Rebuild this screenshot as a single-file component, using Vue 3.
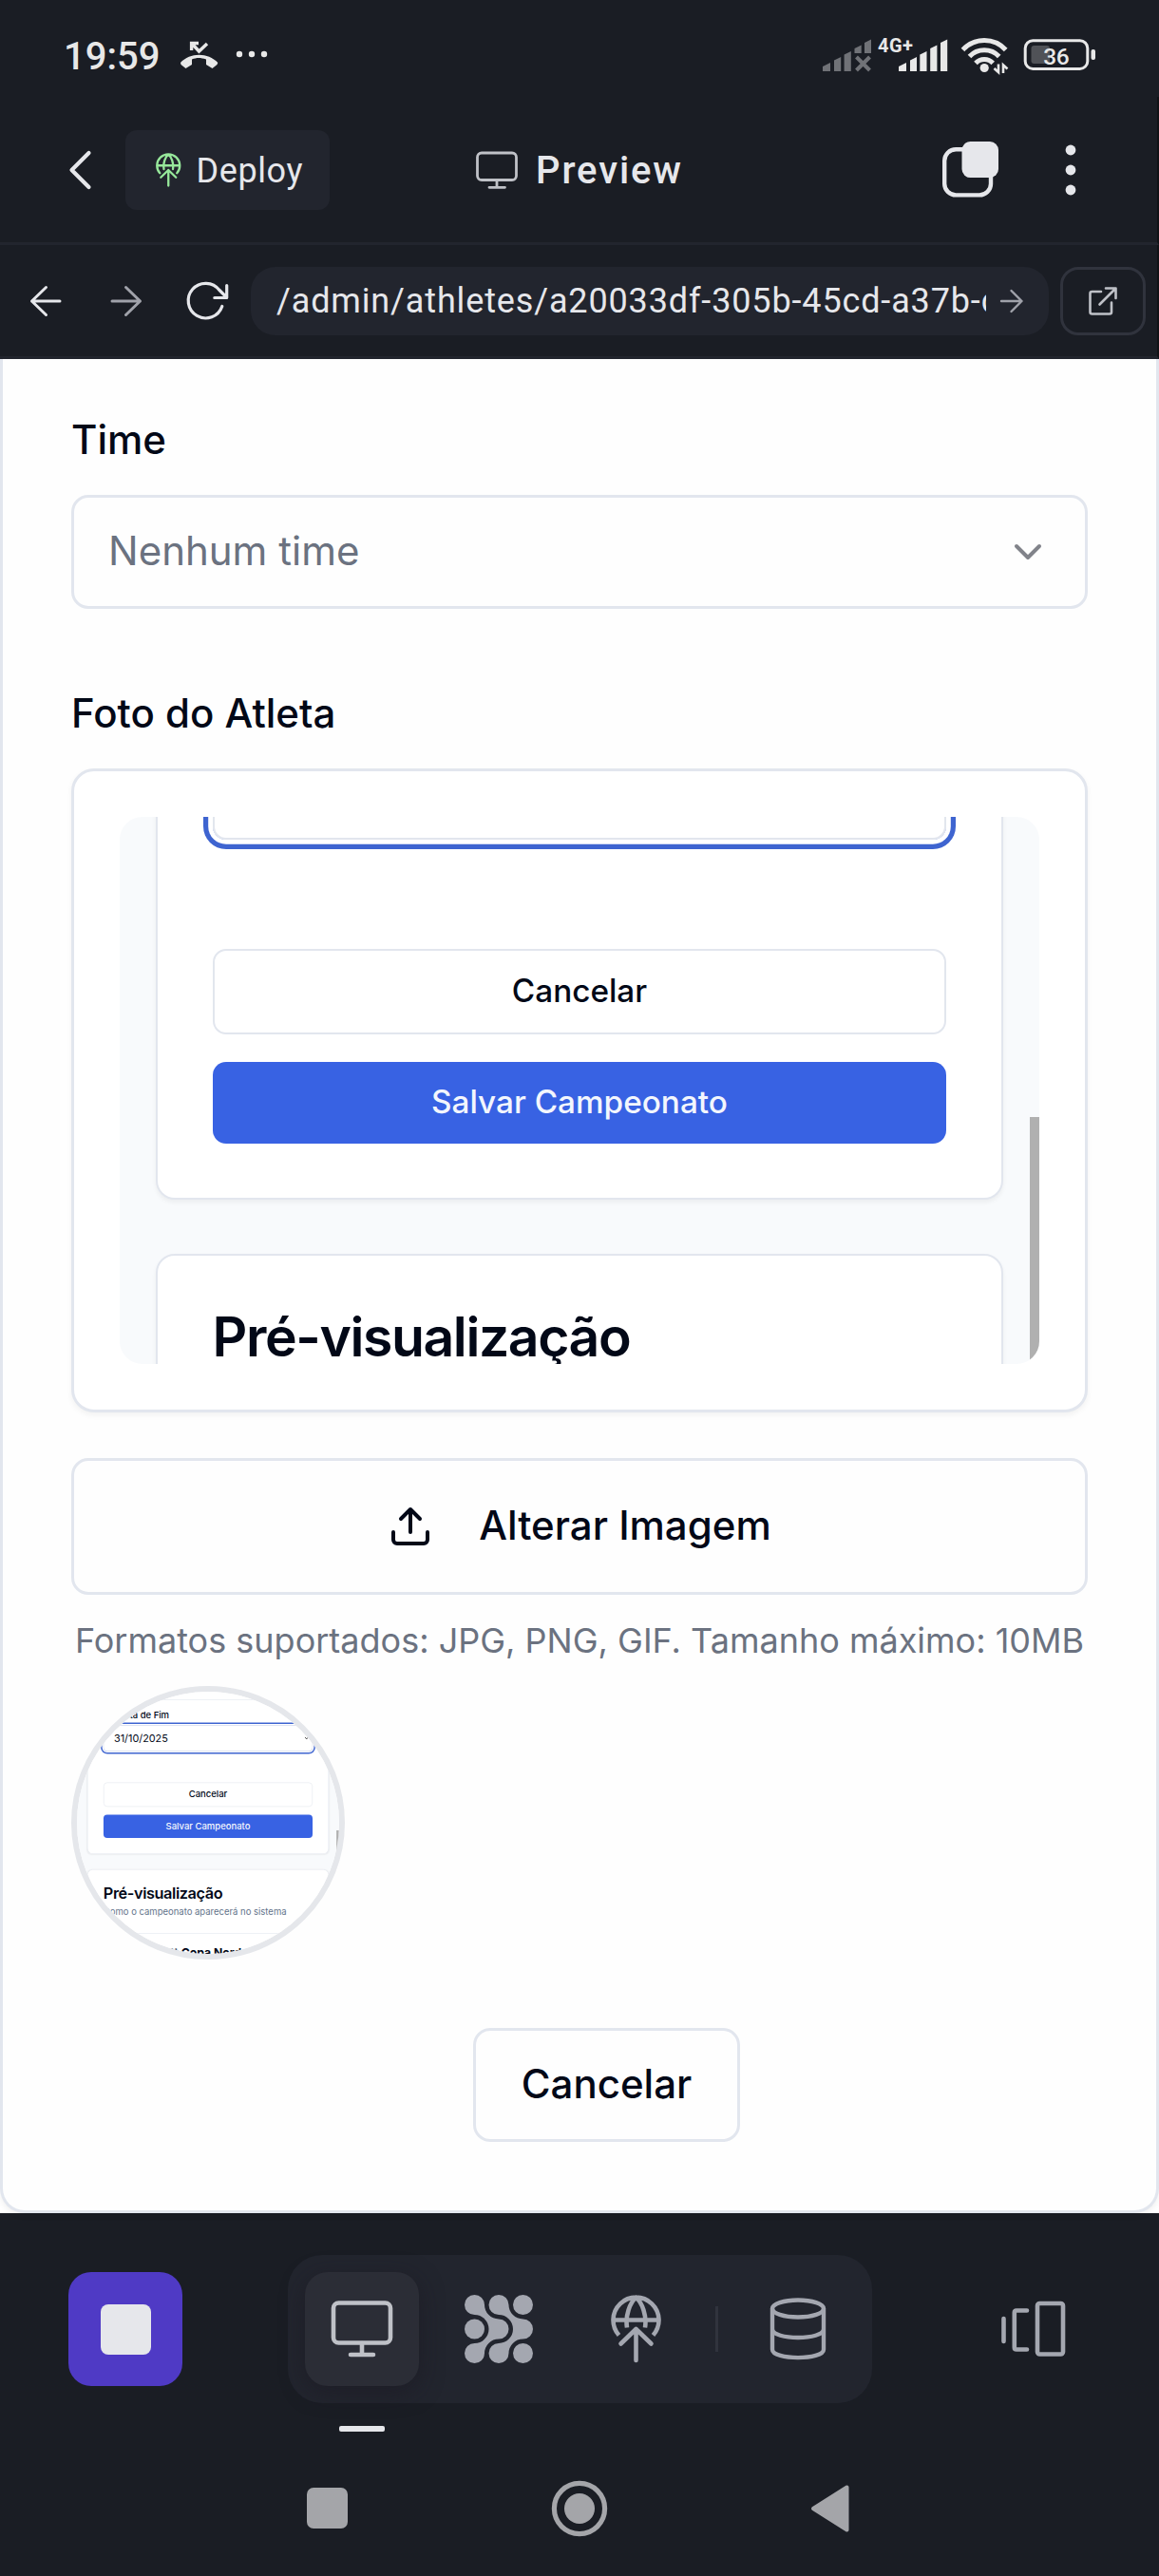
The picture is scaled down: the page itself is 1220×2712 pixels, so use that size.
<script setup>
import { h } from 'vue'

const url = '/admin/athletes/a20033df-305b-45cd-a37b-c4e1'

// Uploaded picture, drawn once and reused by the preview and the avatar.
const Photo = () =>
  h('div', { class: 'ph' }, [
    h('div', { class: 'ph-card ph-first' }, [
      h('div', { class: 'ph-prev' }),
      h('div', { class: 'ph-label' }, 'Data de Fim'),
      h('div', { class: 'ph-input' }, [
        h('span', '31/10/2025'),
        h('svg', { width: 16, height: 12, viewBox: '0 0 16 12' }, [
          h('path', { d: 'M2 2l6 7 6-7', fill: 'none', stroke: '#333', 'stroke-width': 3 })
        ])
      ]),
      h('div', { class: 'ph-btn ph-outline' }, 'Cancelar'),
      h('div', { class: 'ph-btn ph-primary' }, 'Salvar Campeonato')
    ]),
    h('div', { class: 'ph-card ph-second' }, [
      h('div', { class: 'ph-title' }, 'Pré-visualização'),
      h('div', { class: 'ph-sub' }, 'Como o campeonato aparecerá no sistema'),
      h('div', { class: 'ph-box' }, 'tt Copa Nord')
    ]),
    h('div', { class: 'ph-scroll' })
  ])
</script>

<template>
  <div class="screen">
    <div class="status">
      <span class="clock">19:59</span>
      <svg class="call" width="96" height="36" viewBox="188 40 96 36">
        <path d="M190 66C200 55 219 55 229.300 66L228.500 68 223.500 72 217 68V62.500C211 60.500 207 60.500 202 62.500V68L195.500 72 190.500 68Z" fill="#e8e8e8" />
        <path d="M201.600 53V45.500H209M201.600 45.500L209.500 54 218 46" fill="none" stroke="#e8e8e8" stroke-width="3.400" />
        <circle cx="252" cy="57" r="3.200" fill="#e8e8e8" /><circle cx="265" cy="57" r="3.200" fill="#e8e8e8" /><circle cx="278" cy="57" r="3.200" fill="#e8e8e8" />
      </svg>
      <svg class="radio" width="300" height="44" viewBox="860 36 300 44">
        <g fill="#707277">
          <path d="M866 75V70L874 66V75ZM878 75V63.500L885.200 60V75ZM888.600 75V57.500L895.800 54V75ZM899.500 56V51L906.700 47.500V56ZM910 56V45L917 41.500V56Z" />
          <path d="M901.500 60L915.500 74M915.500 60L901.500 74" stroke="#707277" stroke-width="4" />
        </g>
        <text x="924" y="54.600" font-size="20" font-weight="700" fill="#e8e8e8" textLength="37" font-family="Roboto, sans-serif">4G+</text>
        <path fill="#e8e8e8" d="M946 75V70L954 66V75ZM958 75V63.500L965 60V75ZM968.300 75V57.500L975.500 54V75ZM979.200 75V51L986.400 47.500V75ZM990 75V45L997.200 41.500V75Z" />
        <g fill="none" stroke="#e8e8e8" stroke-width="5">
          <path d="M1013.500 52.500A30.500 30.500 0 0 1 1058.700 52.500" />
          <path d="M1020.500 59.500A21.500 21.500 0 0 1 1051.700 59.500" />
          <path d="M1027 66.500A12.500 12.500 0 0 1 1045.200 66.500" />
        </g>
        <circle cx="1036.200" cy="71.500" r="4.600" fill="#e8e8e8" />
        <path d="M1051 67.500V76L1046.500 72M1056 77V68.500L1060.500 72.500" fill="none" stroke="#e8e8e8" stroke-width="2.600" />
        <rect x="1085.500" y="48" width="19.500" height="19" rx="3" fill="#505257" />
        <rect x="1079.200" y="42.800" width="65.600" height="29.600" rx="8" fill="none" stroke="#e8e8e8" stroke-width="3" />
        <rect x="1148.500" y="52" width="4.500" height="11" rx="2" fill="#e8e8e8" />
        <text x="1098.300" y="67.800" font-size="24.500" font-weight="500" fill="#e8e8e8" textLength="27.500" font-family="Roboto, sans-serif">36</text>
      </svg>
    </div>

    <header class="top">
      <svg class="back" width="28" height="44" viewBox="70 157 28 44"><path d="M93.500 161L75.500 179 93.500 197" fill="none" stroke="#e6e7eb" stroke-width="4.200" stroke-linecap="round" stroke-linejoin="round" /></svg>
      <button class="deploy">
        <svg width="26.500" height="36" viewBox="0 0 53 72">
          <g fill="none" stroke="#97e89b" stroke-width="4.600" stroke-linecap="round" stroke-linejoin="round">
            <path d="M8.500 42.500A24 24 0 1 1 44.500 42.500M2.500 26.500H50.500M17 34C15 22 20 8 26.500 3 33 8 38 22 36 34" />
            <path d="M26.500 69V36M10.500 51.500L26.500 36 42.500 51.500" />
          </g>
        </svg>
        <span>Deploy</span>
      </button>
      <svg class="screen-ico" width="44" height="40" viewBox="0 0 44 40"><g fill="none" stroke="#bfc1c7" stroke-width="2.800" stroke-linecap="round"><rect x="1.500" y="2" width="41" height="28.500" rx="4.500" /><path d="M22 31V38M14 38.300H30.500" /></g></svg>
      <span class="title">Preview</span>
      <svg class="copy" width="62" height="62" viewBox="992 148 62 62">
        <rect x="995.200" y="157.200" width="48.800" height="48.200" rx="12" fill="none" stroke="#e6e7eb" stroke-width="4.400" />
        <rect x="1013.500" y="149" width="38.500" height="38" rx="9" fill="#e6e7eb" />
      </svg>
      <svg class="more" width="12" height="56" viewBox="0 0 12 56"><g fill="#e6e7eb"><circle cx="6" cy="7" r="5.400" /><circle cx="6" cy="28" r="5.400" /><circle cx="6" cy="49" r="5.400" /></g></svg>
    </header>

    <nav class="browser">
      <svg class="n1" width="34" height="34" viewBox="0 0 34 34"><path d="M32 17H2.500M17.500 2.500L2.500 17 17.500 31.500" fill="none" stroke="#e6e7eb" stroke-width="3" stroke-linecap="round" stroke-linejoin="round" /></svg>
      <svg class="n2" width="34" height="34" viewBox="0 0 34 34"><path d="M2 17H31.500M16.500 2.500L31.500 17 16.500 31.500" fill="none" stroke="#a0a2aa" stroke-width="3" stroke-linecap="round" stroke-linejoin="round" /></svg>
      <svg class="n3" width="46" height="44" viewBox="195 295 46 44"><path d="M233.800 322.500A18.300 18.300 0 1 1 231 305.500L238.500 313M238.700 300.500V313.500H225.800" fill="none" stroke="#e6e7eb" stroke-width="3.200" stroke-linecap="round" stroke-linejoin="round" /></svg>
      <div class="url">
        <span class="addr">{{ url }}</span>
        <svg width="26" height="26" viewBox="0 0 26 26"><path d="M2 13H23.500M12.500 2L23.500 13 12.500 24" fill="none" stroke="#a0a2aa" stroke-width="2.400" stroke-linecap="round" stroke-linejoin="round" /></svg>
      </div>
      <button class="ext">
        <svg width="32" height="32" viewBox="0 0 32 32"><path d="M14 6H4.500Q2.500 6 2.500 8V27.500Q2.500 29.500 4.500 29.500H23Q25 29.500 25 27.500V17.500M19 2.500H29.500V13M29 3L12.500 19.500" fill="none" stroke="#bfc1c7" stroke-width="2.600" stroke-linecap="round" stroke-linejoin="round" /></svg>
      </button>
    </nav>

    <div class="viewport">
      <main class="card">
        <label class="label">Time</label>
        <div class="select">
          <span>Nenhum time</span>
          <svg width="48" height="48" viewBox="0 0 24 24"><path d="m6 9 6 6 6-6" fill="none" stroke="#81838a" stroke-width="2" stroke-linecap="round" stroke-linejoin="round" /></svg>
        </div>
        <label class="label second">Foto do Atleta</label>
        <div class="photo"><div class="frame"><Photo /></div></div>
        <button class="change">
          <svg width="48" height="48" viewBox="0 0 24 24"><path d="M21 15v4a2 2 0 0 1-2 2H5a2 2 0 0 1-2-2v-4M17 8l-5-5-5 5M12 3v12" fill="none" stroke="#020817" stroke-width="2" stroke-linecap="round" stroke-linejoin="round" /></svg>
          <span>Alterar Imagem</span>
        </button>
        <p class="hint">Formatos suportados: JPG, PNG, GIF. Tamanho máximo: 10MB</p>
        <div class="avatar"><Photo /></div>
        <button class="cancel">Cancelar</button>
      </main>
    </div>

    <footer class="dock">
      <button class="stop"><i></i></button>
      <div class="tools">
        <div class="tool active">
          <svg width="66" height="60" viewBox="0 0 66 60"><g fill="none" stroke="#bfc1c7" stroke-width="4.600" stroke-linecap="round"><rect x="3" y="2.500" width="60" height="42" rx="5.500" /><path d="M33 45V56M21 57H45" /></g></svg>
          <i class="mark"></i>
        </div>
        <svg class="t2" width="72" height="72" viewBox="0 0 72 72" fill="#a4a7b0">
          <path d="M0 10.500A10.500 10.500 0 0 1 21 10.500A15 15 0 0 0 36 25.500A10.500 10.500 0 0 1 36 46.500A15 15 0 0 0 21 61.500A10.500 10.500 0 1 1 10.500 51A15 15 0 0 0 10.500 21A10.500 10.500 0 0 1 0 10.500Z" />
          <path transform="translate(25.500)" d="M0 10.500A10.500 10.500 0 0 1 21 10.500A15 15 0 0 0 36 25.500A10.500 10.500 0 0 1 36 46.500A15 15 0 0 0 21 61.500A10.500 10.500 0 1 1 10.500 51A15 15 0 0 0 10.500 21A10.500 10.500 0 0 1 0 10.500Z" />
          <circle cx="10.500" cy="36" r="10.500" /><circle cx="61.500" cy="10.500" r="10.500" /><circle cx="61.500" cy="61.500" r="10.500" />
        </svg>
        <svg class="t3" width="53" height="72" viewBox="0 0 53 72">
          <g fill="none" stroke="#a4a7b0" stroke-width="4.600">
            <path d="M8.500 42.500A24 24 0 1 1 44.500 42.500M2.500 26.500H50.500M17 34.500C15 22 20 8 26.500 3 33 8 38 22 36 34.500" />
            <path d="M26.500 69V36M10.500 51.500L26.500 36 42.500 51.500" stroke-linecap="round" stroke-linejoin="round" />
          </g>
        </svg>
        <i class="sep"></i>
        <svg class="t4" width="60" height="66" viewBox="0 0 60 66"><g fill="none" stroke="#a4a7b0" stroke-width="4.400"><ellipse cx="30" cy="11.500" rx="27" ry="9" /><path d="M3 11.500V54.500C3 66 57 66 57 54.500V11.500M3 33C3 45 57 45 57 33" /></g></svg>
      </div>
      <svg class="panels" width="70" height="60" viewBox="0 0 70 60"><g fill="none" stroke="#a4a7b0" stroke-width="4.600" stroke-linecap="round" stroke-linejoin="round"><path d="M3.500 20V44M28 11.500H17Q14.800 11.500 14.800 13.700V50.500Q14.800 52.500 17 52.500H28" /><rect x="39" y="4" width="27" height="53.500" rx="2.500" /></g></svg>
    </footer>
    <div class="system">
      <i class="sq"></i>
      <svg class="home" width="60" height="60" viewBox="0 0 60 60"><circle cx="30" cy="30" r="26.600" fill="none" stroke="#a4a5a9" stroke-width="5.200" /><circle cx="30" cy="30" r="16" fill="#a4a5a9" /></svg>
      <svg class="prev" width="42" height="52" viewBox="0 0 42 52"><path d="M3 26L38.500 3.500V48.500Z" fill="#a4a5a9" stroke="#a4a5a9" stroke-width="4" stroke-linejoin="round" /></svg>
    </div>
  </div>
</template>

<style>
body { margin: 0; background: #1a1d24; }
.ph { position: relative; width: 968px; height: 968px; overflow: hidden; background: #f8fafc; font-family: Inter, sans-serif; color: #020817; box-sizing: border-box; }
.ph * { box-sizing: border-box; }
.ph-card { margin: 0 38px; padding: 0 57.600px; background: #fff; border: 2.400px solid #e2e6ee; box-shadow: 0 3px 5px rgba(0,0,0,.05); }
.ph-first { height: 599px; border-top: 0; border-radius: 0 0 20px 20px; }
.ph-second { margin-top: 57px; height: 400px; border-radius: 20px 20px 0 0; padding-top: 48.600px; }
.ph-prev { height: 31px; border-bottom: 2.400px solid #e2e6ee; }
.ph-label { margin-top: 19px; height: 74px; padding-left: 54px; line-height: 74px; font-size: 33.300px; font-weight: 500; }
.ph-input { display: flex; align-items: center; justify-content: space-between; height: 95.500px; padding: 0 12px 0 37px; border: 2.400px solid #e2e6ee; border-radius: 14px; font-size: 38.100px; box-shadow: 0 0 0 4.800px #fff, 0 0 0 10px #3e64d0; }
.ph-btn { display: flex; align-items: center; justify-content: center; border-radius: 14px; font-size: 33.300px; font-weight: 500; padding-bottom: 2px; }
.ph-outline { margin-top: 115.500px; height: 90px; border: 2.400px solid #e2e6ee; }
.ph-primary { margin-top: 29px; height: 86px; background: #3862e3; color: #f3f6fd; }
.ph-title { height: 74px; line-height: 74px; font-size: 57.100px; font-weight: 600; letter-spacing: -0.025em; }
.ph-sub { height: 60px; line-height: 60px; font-size: 33.300px; color: #64748b; white-space: nowrap; }
.ph-box { margin-top: 50px; height: 142px; border-top: 2.400px solid #e2e6ee; padding-left: 247px; line-height: 139px; font-size: 42.800px; font-weight: 700; white-space: nowrap; }
.ph-scroll { position: absolute; right: 0; top: 511.700px; width: 10px; height: 460px; background: #b0b0b0; }
</style>

<style scoped>
* { box-sizing: border-box; }
button { border: 0; padding: 0; margin: 0; background: none; font: inherit; color: inherit; }
svg { display: block; flex: none; }
.screen { width: 1220px; height: 2712px; overflow: hidden; background: #1a1d24; font-family: Inter, sans-serif; }
.status { height: 102px; display: flex; }
.clock { width: 121px; margin-left: 67px; padding-top: 36px; font: 500 40px/47px Roboto, sans-serif; color: #e8e8e8; }
.call { margin-top: 40px; }
.radio { margin: 36px 0 0 576px; }
.top { height: 156px; border-bottom: 3px solid #22252e; border-right: 2px solid #101216; display: flex; align-items: center; font-family: Roboto, sans-serif; color: #e6e7eb; }
.back { margin-left: 70px; }
.deploy { width: 215px; height: 84px; margin-left: 34px; border-radius: 12px; background: #22252e; display: flex; align-items: center; padding-left: 32px; }
.deploy span { margin-left: 16px; padding-top: 2px; font-size: 36px; letter-spacing: .6px; }
.screen-ico { margin-left: 154px; }
.title { width: 160px; margin-left: 19px; padding-top: 2px; font-size: 40px; font-weight: 500; letter-spacing: 1.900px; }
.copy { margin-left: 267px; }
.more { margin-left: 68px; }
.browser { height: 120px; border-bottom: 3px solid #22252e; border-right: 2px solid #101216; display: flex; align-items: center; }
.n1 { margin-left: 31px; }
.n2 { margin-left: 51px; }
.n3 { margin-left: 45px; }
.url { width: 840px; height: 72px; margin-left: 23px; border-radius: 26px; background: #22252e; display: flex; align-items: center; padding-left: 27px; }
.addr { width: 747px; padding-top: 1px; overflow: hidden; white-space: nowrap; font: 400 36px/60px Roboto, sans-serif; letter-spacing: .860px; color: #e6e7eb; }
.url svg { margin-left: 14px; }
.ext { width: 90px; height: 72px; margin-left: 12px; border: 3px solid #30333d; border-radius: 19px; display: flex; align-items: center; justify-content: center; }
.viewport { height: 1952px; background: #fff; }
.card { height: 1952px; border: 3px solid #e2e6ee; border-top: 0; border-radius: 0 0 26px 26px; padding: 64px 72px 0; background: #fefefe; color: #020817; box-shadow: 0 3px 6px rgba(0,0,0,.06); display: flex; flex-direction: column; }
.label { height: 42px; line-height: 42px; font-size: 42px; font-weight: 500; }
.select { height: 120px; margin-top: 37px; border: 3px solid #e2e6ee; border-radius: 18px; display: flex; align-items: center; justify-content: space-between; padding: 0 36px; font-size: 42px; color: #6b7280; }
.select span, .change span { padding-bottom: 3px; }
.second { margin-top: 89px; }
.photo { height: 678px; margin-top: 37px; border: 3px solid #e2e6ee; border-radius: 24px; padding: 48px; background: #fff; box-shadow: 0 3px 6px rgba(0,0,0,.05); }
.frame { height: 576px; border-radius: 24px; overflow: hidden; }
.frame .ph { margin-top: -196px; }
.change { height: 144px; margin-top: 48px; border: 3px solid #e2e6ee; border-radius: 18px; display: flex; align-items: center; justify-content: center; gap: 48px; font-size: 42px; font-weight: 500; }
.hint { margin: 24px 0 0; height: 48px; line-height: 48px; font-size: 36px; text-align: center; white-space: nowrap; color: #6b7280; }
.avatar { width: 288px; height: 288px; margin-top: 24px; border: 6px solid #e5e7eb; border-radius: 50%; overflow: hidden; }
.avatar .ph { transform: scale(.2851); transform-origin: 0 0; }
.cancel { width: 281px; height: 120px; margin: 72px 0 0 423px; padding-bottom: 3px; border: 3px solid #e2e6ee; border-radius: 18px; font-size: 42px; font-weight: 500; }
.dock { height: 200px; padding-top: 44px; display: flex; }
.stop { width: 120px; height: 120px; margin: 18px 0 0 72px; border-radius: 24px; background: #4f3ac5; display: flex; align-items: center; justify-content: center; }
.stop i { width: 53px; height: 53px; border-radius: 8px; background: #e6e7eb; }
.tools { width: 615px; height: 156px; margin-left: 111px; border-radius: 36px; background: #22252e; display: flex; align-items: center; padding-left: 18px; }
.tool { position: relative; width: 120px; height: 120px; border-radius: 24px; background: #2b2d36; display: flex; align-items: center; justify-content: center; box-shadow: 0 6px 24px rgba(26,22,32,.5); }
.mark { position: absolute; left: 36px; top: 162px; width: 48px; height: 6px; border-radius: 2px; background: #e6e7eb; }
.t2 { margin-left: 48px; }
.t3 { margin-left: 82px; }
.sep { width: 3px; height: 48px; margin-left: 57px; background: #30333d; }
.t4 { margin-left: 54px; }
.panels { margin: 47px 0 0 135px; }
.system { height: 182px; display: flex; padding-top: 81px; }
.sq { width: 43px; height: 43px; margin: 8px 0 0 323px; border-radius: 7px; background: #a4a5a9; }
.home { margin-left: 214px; }
.prev { margin: 4px 0 0 213px; }
</style>
